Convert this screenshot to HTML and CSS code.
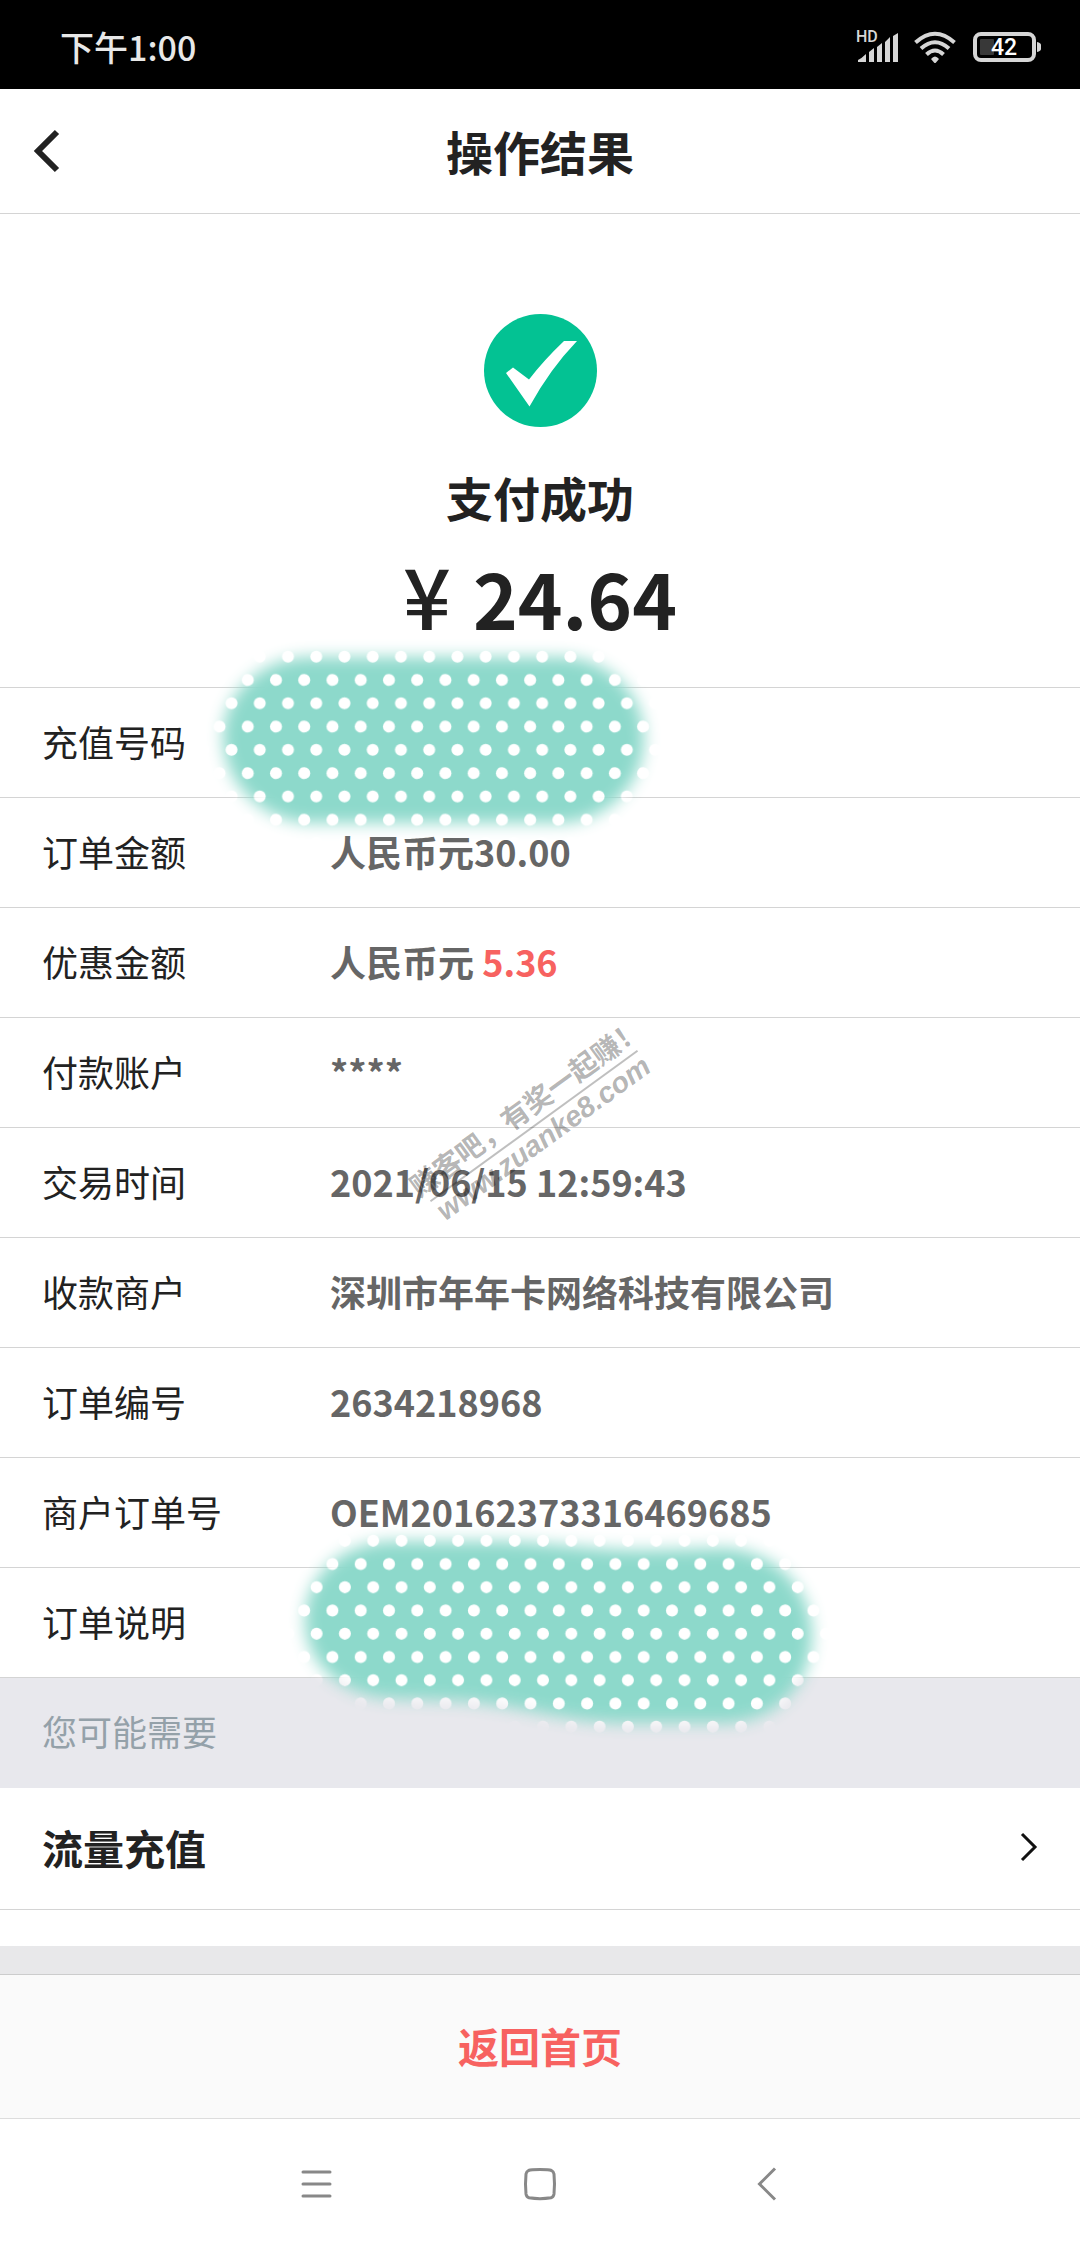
FILE: index.html
```html
<!DOCTYPE html>
<html lang="zh-CN">
<head>
<meta charset="utf-8">
<meta name="viewport" content="width=device-width, initial-scale=1">
<title>操作结果</title>
<link rel="stylesheet" href="styles.css">
</head>
<body>
<div class="status">
  <time class="status-time">下午1:00</time>
  <div class="status-icons">
    <svg width="42" height="32" viewBox="0 0 42 32">
      <text class="hd" x="0" y="11">HD</text>
      <path fill="#d6d6d6" d="M2 31V29Q6 27 10 23V31ZM13 31V21L18 17V31ZM21 31V16L26 12V31ZM29 31V11L34 6V31ZM37 31V5L42 2V31Z"/>
    </svg>
    <svg width="42" height="32" viewBox="0 0 42 32" fill="none" stroke="#d6d6d6" stroke-width="4">
      <path d="M1.500 11.500Q21-6 40.500 11.500M7 17.500Q21 5 35 17.500M12.500 23.500Q21 15.500 29.500 23.500"/>
      <path fill="#d6d6d6" stroke="none" d="M17 28Q21 23 25 28L22 31.500Q21 32.500 20 31.500Z"/>
    </svg>
    <svg width="70" height="32" viewBox="0 0 70 32">
      <rect x="3" y="3" width="59" height="26" rx="6" fill="none" stroke="#d6d6d6" stroke-width="4"/>
      <rect x="8" y="8" width="14" height="16" rx="1" fill="#383838"/>
      <path fill="#d6d6d6" d="M65 11Q69 12 69 14V18Q69 20 65 21Z"/>
      <text class="battery" x="32" y="24">42</text>
    </svg>
  </div>
</div>

<header class="header">
  <button class="back" type="button" aria-label="返回">
    <svg width="28" height="44" viewBox="0 0 28 44" fill="none" stroke="#222" stroke-width="6"><path d="M25 3L6 22L25 41"/></svg>
  </button>
  <h1 class="title">操作结果</h1>
</header>

<main>
  <section class="result">
    <svg class="tick" width="113" height="113" viewBox="0 0 113 113">
      <circle cx="56.500" cy="56.500" r="56.500" fill="#03c293"/>
      <path fill="#fff" d="M22 59L29 53.500L45 65.500Q60 46 80 27H93Q66 55 45.500 92.500Z"/>
    </svg>
    <p class="result-text">支付成功</p>
    <p class="amount"><span class="yen">¥</span><span>24.64</span></p>
  </section>

  <div class="details">
    <dl class="list">
      <div class="row"><dt>充值号码</dt><dd></dd></div>
      <div class="row"><dt>订单金额</dt><dd>人民币元30.00</dd></div>
      <div class="row"><dt>优惠金额</dt><dd>人民币元 <span class="off">5.36</span></dd></div>
      <div class="row"><dt>付款账户</dt><dd>****</dd></div>
      <div class="row"><dt>交易时间</dt><dd>2021/06/15 12:59:43</dd></div>
      <div class="row"><dt>收款商户</dt><dd>深圳市年年卡网络科技有限公司</dd></div>
      <div class="row"><dt>订单编号</dt><dd>2634218968</dd></div>
      <div class="row"><dt>商户订单号</dt><dd>OEM20162373316469685</dd></div>
      <div class="row"><dt>订单说明</dt><dd></dd></div>
    </dl>

    <!-- dotted brush strokes hiding the phone number and the note -->
    <svg class="brush brush-phone" width="480" height="230" viewBox="200 630 480 230">
      <defs>
        <filter id="soft1" x="-20%" y="-20%" width="140%" height="140%"><feGaussianBlur stdDeviation="8"/></filter>
        <pattern id="dots1" patternUnits="userSpaceOnUse" x="273.900" y="645" width="28.240" height="46.600">
          <circle cx="14.100" cy="11.700" r="6" fill="#fff"/><circle cx="2.100" cy="35" r="6" fill="#fff"/><circle cx="30.340" cy="35" r="6" fill="#fff"/>
        </pattern>
        <mask id="shape1" maskUnits="userSpaceOnUse" x="200" y="630" width="480" height="230">
          <path fill="#fff" filter="url(#soft1)" d="M308 657H562C610 659 644 694 644 738C644 784 608 821 562 823H308C260 820 223 782 223 736C223 694 260 659 308 657Z"/>
        </mask>
      </defs>
      <g mask="url(#shape1)">
        <rect x="200" y="630" width="480" height="230" fill="#8dd9cb"/>
        <rect x="200" y="630" width="480" height="230" fill="url(#dots1)"/>
      </g>
    </svg>
    <svg class="brush brush-note" width="560" height="230" viewBox="280 1520 560 230">
      <defs>
        <filter id="soft2" x="-20%" y="-20%" width="140%" height="140%"><feGaussianBlur stdDeviation="8"/></filter>
        <pattern id="dots2" patternUnits="userSpaceOnUse" x="358.700" y="1529" width="28.300" height="46.500">
          <circle cx="14.500" cy="11.700" r="6" fill="#fff"/><circle cx="2" cy="35" r="6" fill="#fff"/><circle cx="30.300" cy="35" r="6" fill="#fff"/>
        </pattern>
        <mask id="shape2" maskUnits="userSpaceOnUse" x="280" y="1520" width="560" height="230">
          <path fill="#fff" filter="url(#soft2)" d="M392 1541H500C560 1543 600 1551 650 1550L725 1548C775 1551 812 1588 812 1635C812 1685 775 1721 728 1723H620C560 1721 520 1705 460 1701L385 1698C338 1693 305 1662 305 1620C306 1574 342 1543 392 1541Z"/>
        </mask>
      </defs>
      <g mask="url(#shape2)">
        <rect x="280" y="1520" width="560" height="230" fill="#8dd9cb"/>
        <rect x="280" y="1520" width="560" height="230" fill="url(#dots2)"/>
      </g>
    </svg>

    <div class="watermark">
      <span class="watermark-slogan">赚客吧，有奖一起赚！</span>
      <span class="watermark-site">www.zuanke8.com</span>
    </div>
  </div>

  <h2 class="group">您可能需要</h2>
  <a class="link" href="#data">
    <span>流量充值</span>
    <svg width="22" height="34" viewBox="0 0 22 34" fill="none" stroke="#111" stroke-width="3"><path d="M4 4L17 17L4 30"/></svg>
  </a>
</main>

<footer class="footer">
  <button class="home" type="button">返回首页</button>
</footer>

<nav class="nav">
  <button type="button" aria-label="菜单"><svg width="40" height="40" viewBox="0 0 40 40" stroke="#888" stroke-width="3" stroke-linecap="round"><path d="M8 8H35M8 20H35M8 32H35"/></svg></button>
  <button type="button" aria-label="主屏幕"><svg width="40" height="40" viewBox="0 0 40 40" fill="none" stroke="#888" stroke-width="3"><path d="M20 5.500Q29 5.500 31.500 6.500Q33.500 7.500 34 10Q35 20 34 30Q33.500 33 31 33.800Q20 35.500 9 33.800Q6.500 33 6 30Q5 20 6 10Q6.500 7.500 8.500 6.500Q11 5.500 20 5.500Z"/></svg></button>
  <button type="button" aria-label="后退"><svg width="40" height="40" viewBox="0 0 40 40" fill="none" stroke="#888" stroke-width="3"><path d="M30 4.500L14.500 20L30 35.500"/></svg></button>
</nav>
</body>
</html>
```
FILE: styles.css
```css
* {
  box-sizing: border-box;
  margin: 0;
  padding: 0;
}

body {
  min-height: 100vh;
  background: #fff;
  color: #222;
  font-family: "Noto Sans CJK SC", sans-serif;
  font-size: 36px;
}

svg {
  display: block;
  overflow: visible;
}

button {
  border: 0;
  background: none;
  font: inherit;
  color: inherit;
}

.status {
  display: flex;
  align-items: center;
  justify-content: space-between;
  height: 89px;
  padding: 4px 38px 0 60px;
  background: #000;
  color: #e8e8e8;
}

.status-time {
  font-size: 34px;
  font-weight: 500;
  line-height: 40px;
}

.status-icons {
  display: flex;
  gap: 16px;
}

.hd {
  fill: #d6d6d6;
  font: 500 16px Roboto, sans-serif;
}

.battery {
  fill: #fff;
  font: 500 23px Roboto, sans-serif;
  text-anchor: middle;
}

.header {
  display: grid;
  grid-template-columns: 1fr auto 1fr;
  align-items: center;
  height: 125px;
  padding: 0 32px;
  border-bottom: 1px solid #d4d4d4;
}

.back {
  justify-self: start;
}

.title {
  font-size: 47px;
  font-weight: 700;
  line-height: 56px;
}

.result {
  display: flex;
  flex-direction: column;
  align-items: center;
  padding: 100px 0 49px;
}

.result-text {
  margin: 42px 0 25px;
  font-size: 47px;
  font-weight: 700;
  line-height: 56px;
}

.amount {
  display: flex;
  align-items: baseline;
  gap: 22px;
  height: 88px;
  font-size: 76px;
  font-weight: 700;
  line-height: 88px;
}

.yen {
  font-size: 84px;
  font-weight: 500;
}

.details {
  position: relative;
}

.row {
  display: flex;
  align-items: center;
  height: 110px;
  padding: 0 42px 4px;
  border-top: 1px solid #d4d4d4;
}

.row dt {
  width: 288px;
  flex: none;
}

.row dd {
  color: #666;
  font-weight: 700;
}

.off {
  color: #f76260;
}

.brush {
  position: absolute;
  z-index: 1;
}

.brush-phone {
  left: 200px;
  top: -57px;
}

.brush-note {
  left: 280px;
  top: 833px;
}

.watermark {
  position: absolute;
  left: 406px;
  top: 398px;
  width: 256px;
  color: rgba(0, 0, 0, 0.3);
  white-space: nowrap;
  transform: rotate(-36deg);
  transform-origin: 128px 41px;
}

.watermark-slogan,
.watermark-site {
  display: block;
}

.watermark-slogan {
  border-bottom: 2px solid rgba(0, 0, 0, 0.25);
  font-size: 28px;
  font-weight: 700;
  line-height: 40px;
  text-indent: -7px;
}

.watermark-site {
  font-family: "Liberation Sans", sans-serif;
  font-size: 29px;
  font-style: italic;
  font-weight: 700;
  line-height: 28px;
}

.group {
  height: 111px;
  padding: 0 42px;
  border-top: 1px solid #d4d4d4;
  background: #e8e8ed;
  color: #94a1a9;
  font-size: 35px;
  font-weight: 400;
  line-height: 106px;
}

.link {
  display: flex;
  align-items: center;
  justify-content: space-between;
  height: 122px;
  padding: 0 40px 4px 42px;
  border-bottom: 1px solid #d4d4d4;
  color: #222;
  font-size: 41px;
  font-weight: 700;
  text-decoration: none;
}

.footer {
  margin-top: 36px;
  padding-top: 28px;
  background: #e8e8ea;
}

.home {
  display: block;
  width: 100%;
  height: 145px;
  padding-bottom: 4px;
  border-top: 1px solid #ccc;
  border-bottom: 1px solid #ddd;
  background: #fafafa;
  color: #f76260;
  font-size: 41px;
  font-weight: 700;
}

.nav {
  display: flex;
  align-items: center;
  justify-content: center;
  gap: 185px;
  height: 129px;
}
```
